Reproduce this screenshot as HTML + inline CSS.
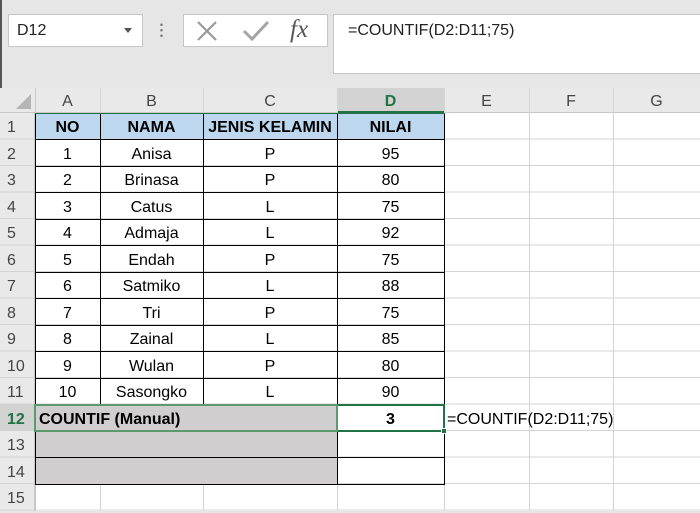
<!DOCTYPE html>
<html><head><meta charset="utf-8"><style>
body{margin:0;width:700px;height:511px;overflow:hidden;background:#e6e6e6;font-family:"Liberation Sans",sans-serif;position:relative}
div{position:absolute;box-sizing:border-box}
.t{font-size:16px;color:#000;text-align:center;white-space:nowrap;line-height:29px}
.h{font-size:16px;color:#444;text-align:center;line-height:27px;top:88px;height:25px}
.r{font-size:16px;color:#444;text-align:left;padding-left:7px;left:0;width:35px;line-height:29px}
.v{width:1px;background:#d4d4d4}
.bv{width:1px;background:#000}
.bh{height:1px;background:#000}
b{font-weight:bold}
</style></head><body>
<div style="left:0;top:0;width:2px;height:88px;background:#555"></div>
<div style="left:8px;top:14px;width:135px;height:33px;background:#fff;border:1px solid #c6c6c6"></div>
<div style="left:17px;top:18px;font-size:16px;line-height:26px;color:#222">D12</div>
<div style="left:124px;top:28px;width:0;height:0;border-left:4px solid transparent;border-right:4px solid transparent;border-top:5px solid #555"></div>
<div style="left:160px;top:22px;width:3px;height:16px;background:radial-gradient(circle,#777 1px,transparent 1.5px) 0 0/3px 5.5px"></div>
<div style="left:183px;top:14px;width:145px;height:33px;background:#fff;border:1px solid #c6c6c6"></div>
<svg style="position:absolute;left:195px;top:19px" width="26" height="24"><path d="M3 3L21 21M21 3L3 21" stroke="#9a9a9a" stroke-width="2.2" fill="none"/></svg>
<svg style="position:absolute;left:241px;top:19px" width="30" height="24"><path d="M3 12L11 20L27 3" stroke="#a5a5a5" stroke-width="3" fill="none"/></svg>
<div style="left:290px;top:12px;font-family:'Liberation Serif',serif;font-style:italic;font-size:25px;color:#555;line-height:36px">fx</div>
<div style="left:333px;top:14px;width:368px;height:60px;background:#fff;border:1px solid #c6c6c6"></div>
<div style="left:348px;top:19px;font-size:16px;line-height:24px;color:#222">=COUNTIF(D2:D11;75)</div>
<div style="left:0;top:88px;width:700px;height:423px;background:#fff"></div>
<div style="left:0;top:88px;width:700px;height:25px;background:#e9e9e9;border-bottom:1px solid #c8c8c8"></div>
<div style="left:0;top:113px;width:35px;height:398px;background:#e9e9e9;border-right:1px solid #c8c8c8"></div>
<div style="left:337px;top:88px;width:107px;height:25px;background:#d2d2d2;border-bottom:2px solid #217346"></div>
<div style="left:0;top:404px;width:35px;height:27px;background:#d2d2d2"></div>
<svg style="position:absolute;left:14px;top:92px" width="18" height="18"><path d="M17 2L17 17L2 17Z" fill="#b5b5b5"/></svg>
<div style="left:35px;top:113px;width:409px;height:27px;background:#bdd7ee"></div>
<div style="left:0;top:113px;width:700px;height:398px;background:repeating-linear-gradient(to bottom,transparent 0,transparent 25.5px,#d4d4d4 25.5px,#d4d4d4 26.5px)"></div>
<div class="v" style="left:35px;top:88px;height:423px;background:#c8c8c8"></div>
<div class="v" style="left:100px;top:88px;height:423px"></div>
<div class="v" style="left:203px;top:88px;height:423px"></div>
<div class="v" style="left:337px;top:88px;height:423px"></div>
<div class="v" style="left:444px;top:88px;height:423px"></div>
<div class="v" style="left:529px;top:88px;height:423px"></div>
<div class="v" style="left:613px;top:88px;height:423px"></div>
<div style="left:35px;top:404px;width:302px;height:80px;background:#d0cece"></div>
<div class="bv" style="left:35px;top:113px;height:371px"></div>
<div class="bv" style="left:100px;top:113px;height:292px"></div>
<div class="bv" style="left:203px;top:113px;height:292px"></div>
<div class="bv" style="left:337px;top:113px;height:371px"></div>
<div class="bv" style="left:444px;top:113px;height:371px"></div>
<div class="bh" style="left:35px;top:139px;width:410px"></div>
<div class="bh" style="left:35px;top:165.5px;width:410px"></div>
<div class="bh" style="left:35px;top:192px;width:410px"></div>
<div class="bh" style="left:35px;top:218.5px;width:410px"></div>
<div class="bh" style="left:35px;top:245px;width:410px"></div>
<div class="bh" style="left:35px;top:271.5px;width:410px"></div>
<div class="bh" style="left:35px;top:298px;width:410px"></div>
<div class="bh" style="left:35px;top:324.5px;width:410px"></div>
<div class="bh" style="left:35px;top:351px;width:410px"></div>
<div class="bh" style="left:35px;top:377.5px;width:410px"></div>
<div class="bh" style="left:35px;top:404px;width:410px"></div>
<div class="bh" style="left:35px;top:430.5px;width:410px"></div>
<div class="bh" style="left:35px;top:457px;width:410px"></div>
<div class="bh" style="left:35px;top:483.5px;width:410px"></div>
<div class="bh" style="left:35px;top:112.5px;width:410px;background:#217346"></div>
<div style="left:336px;top:403.5px;width:109px;height:28px;border:2px solid #217346"></div>
<div style="left:441px;top:428px;width:6px;height:6px;background:#217346;border:1px solid #fff"></div>
<div style="left:34px;top:403.5px;width:304px;height:28px;border:2px solid #5a9a6e"></div>
<div class="h" style="left:35px;width:65px">A</div>
<div class="h" style="left:100px;width:103px">B</div>
<div class="h" style="left:203px;width:134px">C</div>
<div class="h" style="left:337px;width:107px;color:#217346;font-weight:bold">D</div>
<div class="h" style="left:444px;width:85px">E</div>
<div class="h" style="left:529px;width:84px">F</div>
<div class="h" style="left:613px;width:87px">G</div>
<div class="r" style="top:113px">1</div>
<div class="r" style="top:139.5px">2</div>
<div class="r" style="top:166px">3</div>
<div class="r" style="top:192.5px">4</div>
<div class="r" style="top:219px">5</div>
<div class="r" style="top:245.5px">6</div>
<div class="r" style="top:272px">7</div>
<div class="r" style="top:298.5px">8</div>
<div class="r" style="top:325px">9</div>
<div class="r" style="top:351.5px">10</div>
<div class="r" style="top:378px">11</div>
<div class="r" style="top:404.5px;color:#217346;font-weight:bold">12</div>
<div class="r" style="top:431px">13</div>
<div class="r" style="top:457.5px">14</div>
<div class="r" style="top:484px">15</div>
<div class="t" style="left:35px;width:65px;top:113px"><b>NO</b></div>
<div class="t" style="left:100px;width:103px;top:113px"><b>NAMA</b></div>
<div class="t" style="left:203px;width:134px;top:113px"><b>JENIS KELAMIN</b></div>
<div class="t" style="left:337px;width:107px;top:113px"><b>NILAI</b></div>
<div class="t" style="left:35px;width:65px;top:139.5px">1</div><div class="t" style="left:100px;width:103px;top:139.5px">Anisa</div><div class="t" style="left:203px;width:134px;top:139.5px">P</div><div class="t" style="left:337px;width:107px;top:139.5px">95</div>
<div class="t" style="left:35px;width:65px;top:166px">2</div><div class="t" style="left:100px;width:103px;top:166px">Brinasa</div><div class="t" style="left:203px;width:134px;top:166px">P</div><div class="t" style="left:337px;width:107px;top:166px">80</div>
<div class="t" style="left:35px;width:65px;top:192.5px">3</div><div class="t" style="left:100px;width:103px;top:192.5px">Catus</div><div class="t" style="left:203px;width:134px;top:192.5px">L</div><div class="t" style="left:337px;width:107px;top:192.5px">75</div>
<div class="t" style="left:35px;width:65px;top:219px">4</div><div class="t" style="left:100px;width:103px;top:219px">Admaja</div><div class="t" style="left:203px;width:134px;top:219px">L</div><div class="t" style="left:337px;width:107px;top:219px">92</div>
<div class="t" style="left:35px;width:65px;top:245.5px">5</div><div class="t" style="left:100px;width:103px;top:245.5px">Endah</div><div class="t" style="left:203px;width:134px;top:245.5px">P</div><div class="t" style="left:337px;width:107px;top:245.5px">75</div>
<div class="t" style="left:35px;width:65px;top:272px">6</div><div class="t" style="left:100px;width:103px;top:272px">Satmiko</div><div class="t" style="left:203px;width:134px;top:272px">L</div><div class="t" style="left:337px;width:107px;top:272px">88</div>
<div class="t" style="left:35px;width:65px;top:298.5px">7</div><div class="t" style="left:100px;width:103px;top:298.5px">Tri</div><div class="t" style="left:203px;width:134px;top:298.5px">P</div><div class="t" style="left:337px;width:107px;top:298.5px">75</div>
<div class="t" style="left:35px;width:65px;top:325px">8</div><div class="t" style="left:100px;width:103px;top:325px">Zainal</div><div class="t" style="left:203px;width:134px;top:325px">L</div><div class="t" style="left:337px;width:107px;top:325px">85</div>
<div class="t" style="left:35px;width:65px;top:351.5px">9</div><div class="t" style="left:100px;width:103px;top:351.5px">Wulan</div><div class="t" style="left:203px;width:134px;top:351.5px">P</div><div class="t" style="left:337px;width:107px;top:351.5px">80</div>
<div class="t" style="left:35px;width:65px;top:378px">10</div><div class="t" style="left:100px;width:103px;top:378px">Sasongko</div><div class="t" style="left:203px;width:134px;top:378px">L</div><div class="t" style="left:337px;width:107px;top:378px">90</div>
<div class="t" style="left:39px;top:404.5px;text-align:left"><b>COUNTIF (Manual)</b></div>
<div class="t" style="left:337px;width:107px;top:404.5px"><b>3</b></div>
<div class="t" style="left:447px;top:404.5px;text-align:left">=COUNTIF(D2:D11;75)</div>
</body></html>
